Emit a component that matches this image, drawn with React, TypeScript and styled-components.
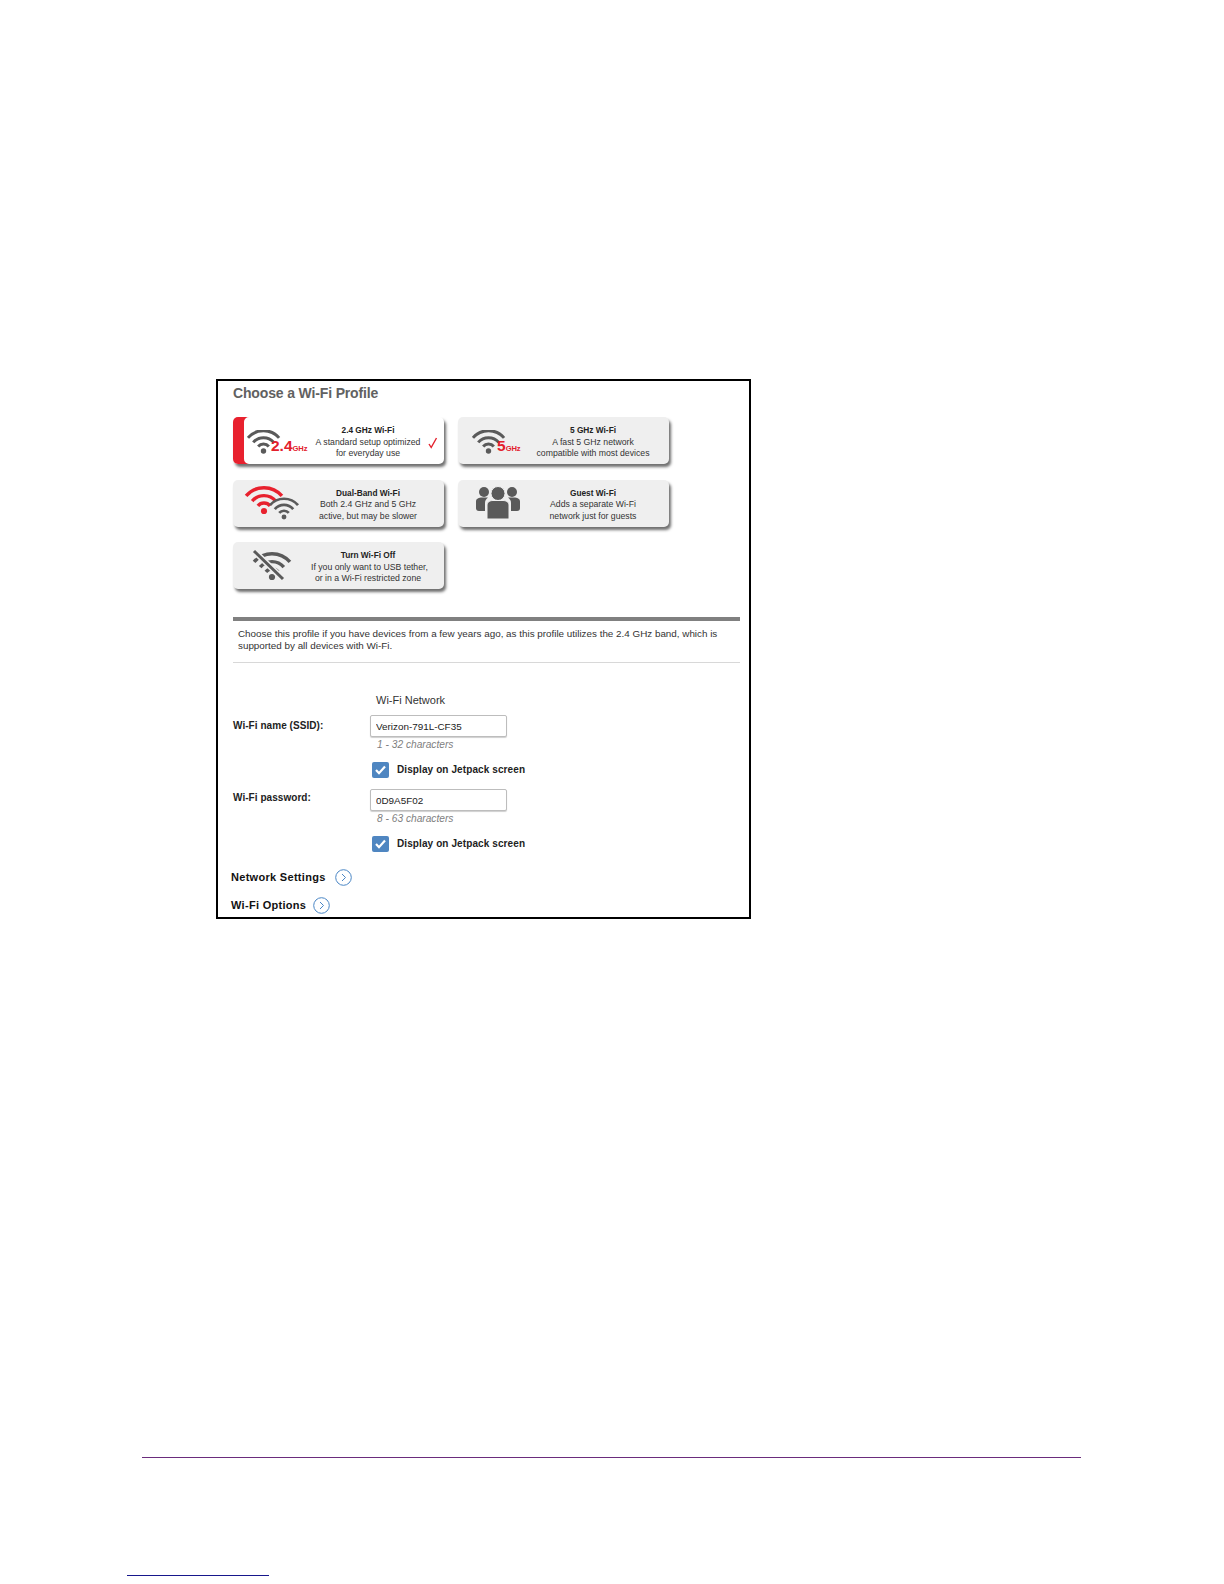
import React from "react";
import styled, { createGlobalStyle } from "styled-components";

const GlobalStyle = createGlobalStyle`
  html, body {
    margin: 0;
    padding: 0;
    background: #fff;
  }
  body {
    font-family: "Liberation Sans", Arial, sans-serif;
    color: #222;
  }
`;

const Page = styled.div`
  width: 1224px;
  height: 1584px;
  display: flex;
  flex-direction: column;
  background: #fff;
  overflow: hidden;
`;

const Frame = styled.div`
  box-sizing: border-box;
  width: 535px;
  height: 540px;
  margin: 379px 0 0 216px;
  padding: 0 9px 0 15px;
  border: 2px solid #000;
  flex: none;
`;

const Title = styled.h2`
  margin: 0;
  height: 24px;
  font-size: 14px;
  line-height: 24px;
  font-weight: 700;
  letter-spacing: -0.15px;
  color: #616161;
`;

const CardGrid = styled.div`
  display: grid;
  grid-template-columns: 211px 211px;
  grid-auto-rows: 47px;
  gap: 15.5px 14px;
  margin-top: 12px;
`;

const Card = styled.div<{ $selected?: boolean }>`
  display: grid;
  grid-template-columns: 78px 114px 1fr;
  align-items: center;
  border-radius: 5px;
  background: ${(p) => (p.$selected ? "#fff" : "#efefef")};
  box-shadow: ${(p) => (p.$selected ? "inset 11px 0 0 #e8212e, " : "")}2px 3px 3px #6f6f6f;
`;

const IconCell = styled.div<{ $left: number; $bottom: number }>`
  display: flex;
  align-items: flex-end;
  height: 100%;
  box-sizing: border-box;
  padding: 0 0 ${(p) => p.$bottom}px ${(p) => p.$left}px;
`;

const BandLabel = styled.span<{ $overlap: number }>`
  margin: 0 0 -3px -${(p) => p.$overlap}px;
  color: #e3202c;
  font-weight: 700;
  font-size: 15.5px;
  line-height: 16px;
  white-space: nowrap;
`;

const BandUnit = styled.span`
  font-size: 7.6px;
  letter-spacing: -0.1px;
`;

const CardText = styled.div`
  padding-top: 4px;
  font-size: 8.7px;
  line-height: 11.5px;
  text-align: center;
  white-space: nowrap;
  color: #333;
`;

const CardHeading = styled.div`
  font-size: 8.3px;
  font-weight: 700;
  color: #222;
`;

const Tick = styled.svg`
  margin: 5px 0 0 3px;
`;

const ThickRule = styled.div`
  height: 4px;
  margin-top: 28px;
  background: #808080;
`;

const Description = styled.p`
  margin: 0;
  padding: 7px 0 0 5px;
  font-size: 9.85px;
  line-height: 12px;
  white-space: nowrap;
  color: #333;
`;

const ThinRule = styled.div`
  height: 1px;
  margin-top: 10px;
  background: #d8d8d8;
`;

const NetworkHeading = styled.div`
  margin: 30px 0 8px 143px;
  font-size: 11px;
  line-height: 14px;
  color: #333;
`;

const Field = styled.div<{ $labelTop: number; $top: number }>`
  display: grid;
  grid-template-columns: 137px 1fr;
  margin-top: ${(p) => p.$top}px;

  & > label {
    padding-top: ${(p) => p.$labelTop}px;
  }
`;

const FieldLabel = styled.label`
  font-size: 10px;
  line-height: 14px;
  font-weight: 700;
  letter-spacing: 0.05px;
  color: #222;
`;

const FieldBody = styled.div`
  display: flex;
  flex-direction: column;
`;

const TextBox = styled.input`
  box-sizing: border-box;
  width: 137px;
  height: 22px;
  padding: 0 5px;
  border: 1px solid #bdbdbd;
  border-radius: 2px;
  box-shadow: 0 1px 1px #cfcfcf;
  outline: none;
  font-family: "Liberation Sans", Arial, sans-serif;
  font-size: 9.9px;
  color: #222;
`;

const Hint = styled.div`
  margin: 2px 0 0 7px;
  font-size: 10.2px;
  line-height: 12px;
  font-style: italic;
  color: #808080;
`;

const CheckRow = styled.div`
  display: flex;
  align-items: center;
  gap: 8px;
  margin: 11px 0 0 2px;
  font-size: 10px;
  line-height: 16px;
  font-weight: 700;
  letter-spacing: 0.1px;
  color: #222;
`;

const CheckBox = styled.span`
  display: flex;
  align-items: center;
  justify-content: center;
  width: 17px;
  height: 16px;
  border-radius: 2px;
  background: #4f86c1;
`;

const LinkRow = styled.div<{ $top: number; $gap: number }>`
  display: flex;
  align-items: center;
  gap: ${(p) => p.$gap}px;
  height: 14px;
  margin: ${(p) => p.$top}px 0 0 -2px;
  font-size: 11px;
  font-weight: 700;
  letter-spacing: 0.3px;
  color: #111;
`;

const FooterRule = styled.div`
  width: 939px;
  height: 1px;
  margin: 538px 0 0 142px;
  background: #6a2c7c;
  flex: none;
`;

const PageLink = styled.div`
  width: 142px;
  height: 1px;
  margin: 117px 0 0 127px;
  background: #17178c;
  flex: none;
`;

const arc = (cx: number, cy: number, r: number) =>
  `M${cx - r * 0.76} ${cy - r * 0.64}A${r} ${r} 0 0 1 ${cx + r * 0.76} ${cy - r * 0.64}`;

const WifiMarks = ({ cx, cy, color, scale = 1 }: { cx: number; cy: number; color: string; scale?: number }) => (
  <g fill="none" stroke={color} strokeWidth={3 * scale}>
    <path d={arc(cx, cy, 20.5 * scale)} />
    <path d={arc(cx, cy, 13.5 * scale)} />
    <path d={arc(cx, cy, 7 * scale)} />
    <circle cx={cx} cy={cy} r={2.7 * scale} fill={color} stroke="none" />
  </g>
);

const WifiIcon = () => (
  <svg width="34" height="24" viewBox="0 0 34 24">
    <WifiMarks cx={16.5} cy={21} color="#5a5a5a" />
  </svg>
);

const DualIcon = () => (
  <svg width="60" height="38" viewBox="0 0 60 38">
    <WifiMarks cx={21} cy={27} color="#e8212e" scale={1.15} />
    <WifiMarks cx={41} cy={33} color="#5a5a5a" scale={0.9} />
  </svg>
);

const GuestIcon = () => (
  <svg width="44" height="33" viewBox="0 0 44 33" fill="#5a5a5a">
    <circle cx="8" cy="6" r="5" />
    <circle cx="36" cy="6" r="5" />
    <path d="M0 15.5C0 12.5 3 11.5 6 11.5H12C10 13 9 14.5 9 17V25H3C1 25 0 24 0 22Z" />
    <path d="M44 15.5C44 12.5 41 11.5 38 11.5H32C34 13 35 14.5 35 17V25H41C43 25 44 24 44 22Z" />
    <circle cx="22" cy="7.5" r="7" stroke="#efefef" strokeWidth="1" />
    <path d="M11 19C11 16 14 14.5 17 14.5H27C30 14.5 33 16 33 19V33H11Z" stroke="#efefef" strokeWidth="1" />
  </svg>
);

const WifiOffIcon = () => (
  <svg width="42" height="32" viewBox="0 0 42 32">
    <WifiMarks cx={21} cy={28} color="#5a5a5a" scale={1.15} />
    <path d="M3 2L32 30" stroke="#efefef" strokeWidth="6" />
    <path d="M3 2L32 30" stroke="#5a5a5a" strokeWidth="3" />
  </svg>
);

const CheckMark = () => (
  <svg width="11" height="10" viewBox="0 0 11 10" fill="none" stroke="#fff" strokeWidth="2.2">
    <path d="M1 5L4 8.2L10 1.5" />
  </svg>
);

const ArrowCircle = () => (
  <svg width="17" height="17" viewBox="0 0 17 17" fill="none" stroke="#4a86c5">
    <circle cx="8.5" cy="8.5" r="7.8" />
    <path d="M7 5L10.5 8.5L7 12" />
  </svg>
);

type Profile = {
  heading: string;
  lines: string[];
  icon: React.ReactNode;
  left: number;
  bottom: number;
  selected?: boolean;
};

const profiles: Profile[] = [
  {
    heading: "2.4 GHz Wi-Fi",
    lines: ["A standard setup optimized", "for everyday use"],
    left: 14,
    bottom: 10,
    selected: true,
    icon: (
      <>
        <WifiIcon />
        <BandLabel $overlap={10}>
          2.4<BandUnit>GHz</BandUnit>
        </BandLabel>
      </>
    ),
  },
  {
    heading: "5 GHz Wi-Fi",
    lines: ["A fast 5 GHz network", "compatible with most devices"],
    left: 14,
    bottom: 10,
    icon: (
      <>
        <WifiIcon />
        <BandLabel $overlap={9}>
          5<BandUnit>GHz</BandUnit>
        </BandLabel>
      </>
    ),
  },
  {
    heading: "Dual-Band Wi-Fi",
    lines: ["Both 2.4 GHz and 5 GHz", "active, but may be slower"],
    left: 10,
    bottom: 5,
    icon: <DualIcon />,
  },
  {
    heading: "Guest Wi-Fi",
    lines: ["Adds a separate Wi-Fi", "network just for guests"],
    left: 18,
    bottom: 8,
    icon: <GuestIcon />,
  },
  {
    heading: "Turn Wi-Fi Off",
    lines: ["If you only want to USB tether,", "or in a Wi-Fi restricted zone"],
    left: 18,
    bottom: 8,
    icon: <WifiOffIcon />,
  },
];

const App = () => {
  return (
    <Page>
      <GlobalStyle />
      <Frame>
        <Title>Choose a Wi-Fi Profile</Title>
        <CardGrid>
          {profiles.map((profile) => (
            <Card key={profile.heading} $selected={profile.selected}>
              <IconCell $left={profile.left} $bottom={profile.bottom}>
                {profile.icon}
              </IconCell>
              <CardText>
                <CardHeading>{profile.heading}</CardHeading>
                {profile.lines.map((line) => (
                  <div key={line}>{line}</div>
                ))}
              </CardText>
              {profile.selected && (
                <Tick width="10" height="12" viewBox="0 0 10 12" fill="none" stroke="#e3202c" strokeWidth="1.4">
                  <path d="M1 7L3.2 10.5L8.5 1" />
                </Tick>
              )}
            </Card>
          ))}
        </CardGrid>
        <ThickRule />
        <Description>
          Choose this profile if you have devices from a few years ago, as this profile utilizes the 2.4 GHz band, which is
          <br />
          supported by all devices with Wi-Fi.
        </Description>
        <ThinRule />
        <NetworkHeading>Wi-Fi Network</NetworkHeading>
        <Field $labelTop={4} $top={0}>
          <FieldLabel>Wi-Fi name (SSID):</FieldLabel>
          <FieldBody>
            <TextBox readOnly value="Verizon-791L-CF35" />
            <Hint>1 - 32 characters</Hint>
            <CheckRow>
              <CheckBox>
                <CheckMark />
              </CheckBox>
              Display on Jetpack screen
            </CheckRow>
          </FieldBody>
        </Field>
        <Field $labelTop={2} $top={11}>
          <FieldLabel>Wi-Fi password:</FieldLabel>
          <FieldBody>
            <TextBox readOnly value="0D9A5F02" />
            <Hint>8 - 63 characters</Hint>
            <CheckRow>
              <CheckBox>
                <CheckMark />
              </CheckBox>
              Display on Jetpack screen
            </CheckRow>
          </FieldBody>
        </Field>
        <LinkRow $top={18} $gap={9}>
          Network Settings <ArrowCircle />
        </LinkRow>
        <LinkRow $top={14} $gap={7}>
          Wi-Fi Options <ArrowCircle />
        </LinkRow>
      </Frame>
      <FooterRule />
      <PageLink />
    </Page>
  );
};

export default App;
